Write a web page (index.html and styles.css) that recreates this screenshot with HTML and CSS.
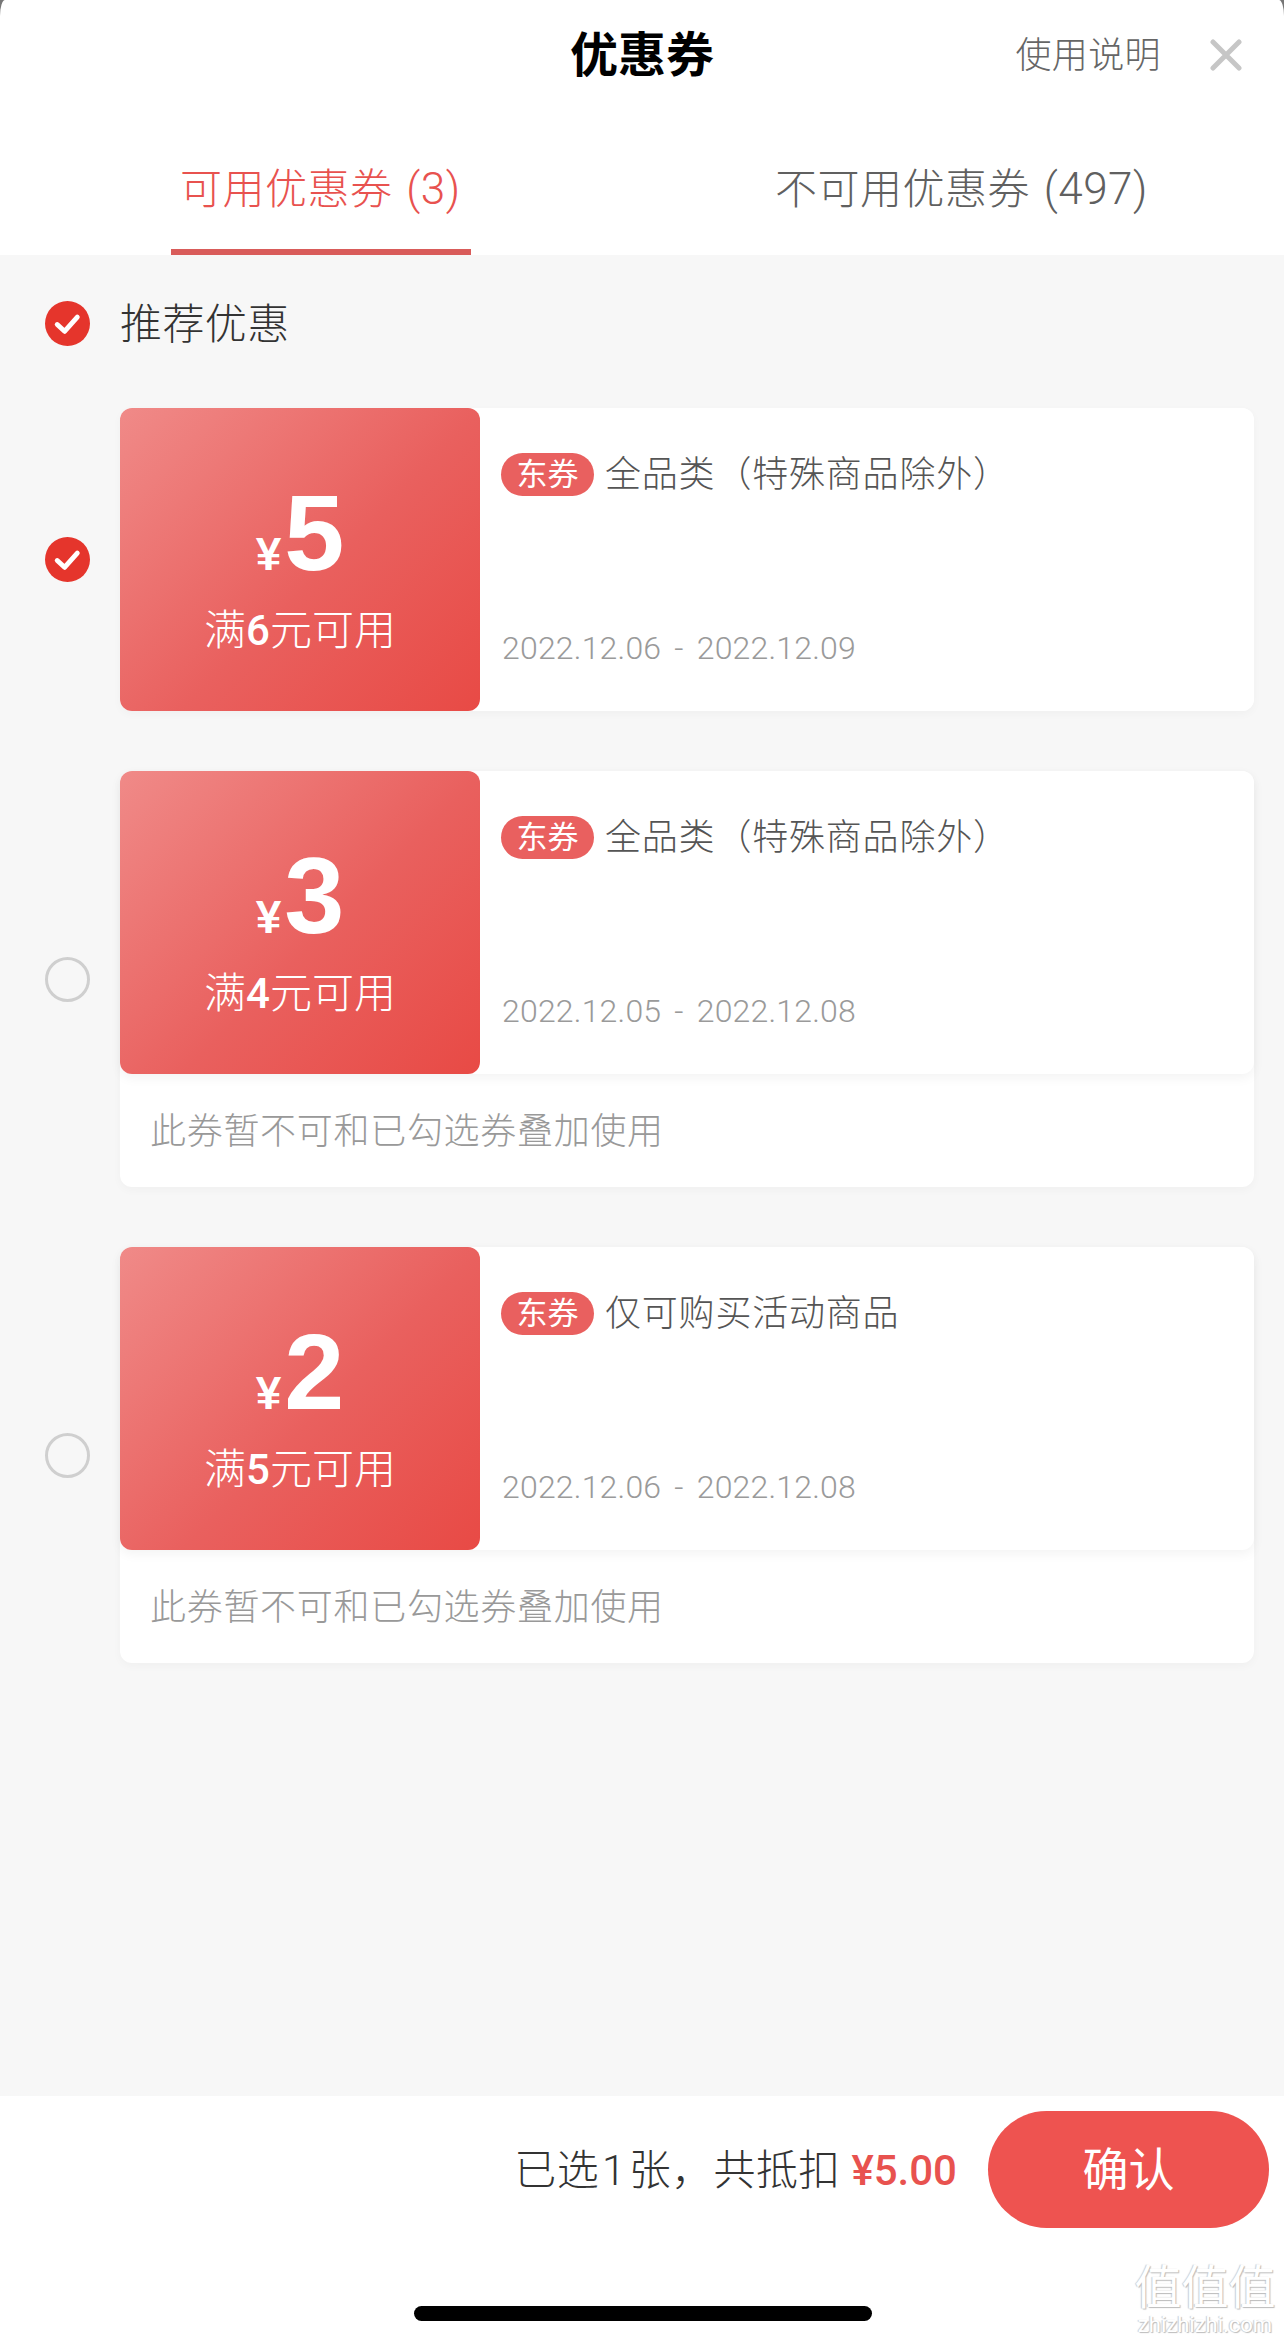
FILE: index.html
```html
<!DOCTYPE html>
<html lang="zh-CN">
<head>
  <meta charset="UTF-8" />
  <meta name="viewport" content="width=device-width, initial-scale=1.0"/>
  <title>优惠券</title>
  <link rel="stylesheet" href="styles.css">
</head>
<body>
  <div class="sheet">
    <header class="top">
      <h1 class="title">优惠券</h1>
      <div class="top-right">
        <span class="help">使用说明</span>
        <svg class="close" viewBox="0 0 32 32"><path d="M3 3 L29 29 M29 3 L3 29"/></svg>
      </div>
    </header>

    <nav class="tabs">
      <div class="tab tab-on"><span class="tab-label">可用优惠券 <span class="count">(3)</span></span></div>
      <div class="tab tab-off"><span class="tab-label">不可用优惠券 <span class="count">(497)</span></span></div>
    </nav>

    <main class="list">
      <div class="recommend">
        <svg class="check" viewBox="0 0 46 46"><circle cx="23" cy="23" r="23"/><path d="M12.5 24 L20 31 L33 16.5"/></svg>
        <span class="recommend-text">推荐优惠</span>
      </div>

      <div class="row">
        <svg class="check" viewBox="0 0 46 46"><circle cx="23" cy="23" r="23"/><path d="M12.5 24 L20 31 L33 16.5"/></svg>
        <div class="card">
          <div class="coupon">
            <div class="value">
              <div class="amount"><span class="yen">¥</span><span class="num">5</span></div>
              <div class="limit">满<b>6</b>元可用</div>
            </div>
            <div class="detail">
              <div class="name"><span class="tag">东券</span><span class="name-text">全品类（特殊商品除外）</span></div>
              <div class="date">2022.12.06 - 2022.12.09</div>
            </div>
          </div>
        </div>
      </div>

      <div class="row">
        <span class="radio"></span>
        <div class="card">
          <div class="coupon has-note">
            <div class="value">
              <div class="amount"><span class="yen">¥</span><span class="num">3</span></div>
              <div class="limit">满<b>4</b>元可用</div>
            </div>
            <div class="detail">
              <div class="name"><span class="tag">东券</span><span class="name-text">全品类（特殊商品除外）</span></div>
              <div class="date">2022.12.05 - 2022.12.08</div>
            </div>
          </div>
          <div class="note">此券暂不可和已勾选券叠加使用</div>
        </div>
      </div>

      <div class="row">
        <span class="radio"></span>
        <div class="card">
          <div class="coupon has-note">
            <div class="value">
              <div class="amount"><span class="yen">¥</span><span class="num">2</span></div>
              <div class="limit">满<b>5</b>元可用</div>
            </div>
            <div class="detail">
              <div class="name"><span class="tag">东券</span><span class="name-text">仅可购买活动商品</span></div>
              <div class="date">2022.12.06 - 2022.12.08</div>
            </div>
          </div>
          <div class="note">此券暂不可和已勾选券叠加使用</div>
        </div>
      </div>
    </main>

    <footer class="bottom">
      <div class="bar">
        <span class="total">已选<i>1</i>张，共抵扣 <em>¥5.00</em></span>
        <button class="confirm">确认</button>
      </div>
      <div class="home"></div>
    </footer>
  </div>

  <div class="mark">
    <div class="mark-cn">值值值</div>
    <div class="mark-en">zhizhizhi.com</div>
  </div>
</body>
</html>
```

FILE: styles.css
```css
* {
  margin: 0;
  padding: 0;
  box-sizing: border-box;
  font-family: "Roboto", "Noto Sans CJK SC", sans-serif;
}

html, body {
  width: 100%;
  height: 100%;
  background: #fff;
  overflow: hidden;
}

.sheet {
  position: relative;
  height: 2345px;
  display: flex;
  flex-direction: column;
  background: #777;
}

/* title bar */
.top {
  position: relative;
  height: 107px;
  background: #fff;
  border-radius: 5px 5px 0 0 / 16px 16px 0 0;
  display: flex;
  align-items: center;
  justify-content: center;
}

.title {
  font-size: 48px;
  font-weight: 700;
  color: #000;
  margin-bottom: 6px;
}

.top-right {
  position: absolute;
  right: 42px;
  top: 30px;
  display: flex;
  align-items: center;
  gap: 49px;
}

.help {
  margin-top: 3px;
  font-size: 36px;
  line-height: 46px;
  letter-spacing: 0.4px;
  font-weight: 300;
  color: #666;
}

.close {
  width: 32px;
  height: 32px;
  fill: none;
  stroke: #c6c6c6;
  stroke-width: 5;
  stroke-linecap: round;
}

/* tabs */
.tabs {
  height: 148px;
  background: #fff;
  display: flex;
}

.tab {
  display: flex;
  justify-content: center;
  font-size: 42px;
  font-weight: 300;
}

.tab-label {
  height: 100%;
  padding-top: 53px;
  line-height: 58px;
  white-space: nowrap;
  letter-spacing: 0.5px;
  word-spacing: 3px;
}

.count {
  font-size: 44px;
}

.tab-on {
  width: 300px;
  margin-left: 171px;
  color: #e8524f;
}

.tab-on .tab-label {
  width: 100%;
  padding-left: 9px;
  border-bottom: 6px solid #d95c5a;
}

.tab-off {
  margin-left: 304px;
  color: #606060;
}

/* coupon list */
.list {
  flex: 1;
  padding: 0 30px 0 45px;
  background: #f7f7f7;
}

.recommend {
  height: 153px;
  padding-bottom: 17px;
  display: flex;
  align-items: center;
  gap: 30px;
  font-size: 42px;
  font-weight: 300;
  color: #333;
}

.recommend-text {
  margin-bottom: 5px;
  letter-spacing: 0.4px;
}

.check {
  width: 45px;
  height: 45px;
  flex-shrink: 0;
}

.check circle {
  fill: #e5352c;
}

.check path {
  fill: none;
  stroke: #fff;
  stroke-width: 5;
  stroke-linecap: round;
  stroke-linejoin: round;
}

.row {
  display: flex;
  align-items: center;
  gap: 30px;
  margin-bottom: 60px;
}

.radio {
  width: 45px;
  height: 45px;
  flex-shrink: 0;
  border: 3px solid #cfcfcf;
  border-radius: 50%;
}

.card {
  flex: 1;
  background: #fff;
  border-radius: 12px;
  box-shadow: 0 3px 10px rgba(0, 0, 0, 0.03);
}

.coupon {
  height: 303px;
  display: flex;
  background: #fff;
  border-radius: 12px;
}

.has-note {
  box-shadow: 0 4px 12px rgba(0, 0, 0, 0.05);
}

.value {
  width: 360px;
  flex-shrink: 0;
  border-radius: 12px;
  background: linear-gradient(135deg, #f08a88 0%, #e9605e 55%, #e84a45 100%);
  color: #fff;
  text-align: center;
  padding-top: 62px;
}

.amount {
  height: 133px;
  line-height: 126px;
  font-family: "Liberation Sans", sans-serif;
}

.yen {
  font-size: 46px;
  font-weight: 700;
  margin-right: 3px;
  font-family: "Liberation Sans", sans-serif;
}

.num {
  font-size: 108px;
  font-weight: 700;
  font-family: "Liberation Sans", sans-serif;
}

.limit {
  font-size: 42px;
  line-height: 56px;
  font-weight: 300;
}

.limit b {
  font-weight: 500;
}

.detail {
  flex: 1;
  padding: 45px 21px 0;
  display: flex;
  flex-direction: column;
}

.name {
  display: flex;
  align-items: center;
  height: 43px;
  font-size: 36px;
  font-weight: 300;
  color: #555;
}

.name-text {
  margin-bottom: 8px;
  letter-spacing: 0.8px;
}

.tag {
  width: 93px;
  height: 43px;
  margin-right: 11px;
  border-radius: 22px;
  background: #e9605f;
  color: #fff;
  font-size: 31px;
  font-weight: 400;
  line-height: 43px;
  text-align: center;
}

.date {
  margin-top: 132px;
  padding-left: 1px;
  font-size: 32px;
  line-height: 40px;
  letter-spacing: 0.2px;
  word-spacing: 5px;
  font-weight: 300;
  color: #9a9a9a;
}

.note {
  height: 113px;
  padding: 0 30px 5px;
  display: flex;
  align-items: center;
  font-size: 36px;
  letter-spacing: 0.7px;
  font-weight: 300;
  color: #999;
}

/* bottom bar */
.bottom {
  height: 249px;
  background: #fff;
}

.bar {
  display: flex;
  justify-content: flex-end;
  align-items: center;
  gap: 31px;
  padding: 15px 15px 0 0;
}

.total {
  margin-bottom: 6px;
  font-size: 42px;
  letter-spacing: 0.4px;
  font-weight: 300;
  color: #333;
}

.total i {
  margin: 0 3px;
  font-style: normal;
}

.total em {
  font-style: normal;
  font-weight: 500;
  font-size: 42px;
  letter-spacing: 0;
  color: #e8524f;
}

.confirm {
  width: 281px;
  height: 117px;
  padding-bottom: 7px;
  border: none;
  border-radius: 59px;
  background: #ee5350;
  color: #fff;
  font-size: 46px;
  font-weight: 400;
}

.home {
  width: 458px;
  height: 15px;
  margin: 78px 0 0 414px;
  background: #000;
  border-radius: 8px;
}

/* site stamp in the corner */
.mark {
  position: absolute;
  right: 8px;
  bottom: 8px;
  width: 142px;
  text-align: center;
  color: #fff;
  text-shadow: 1px 1px 1px #bbb, -1px 0 1px #ccc;
}

.mark-cn {
  font-size: 47px;
  line-height: 50px;
}

.mark-en {
  font-size: 22px;
  line-height: 24px;
}
```
